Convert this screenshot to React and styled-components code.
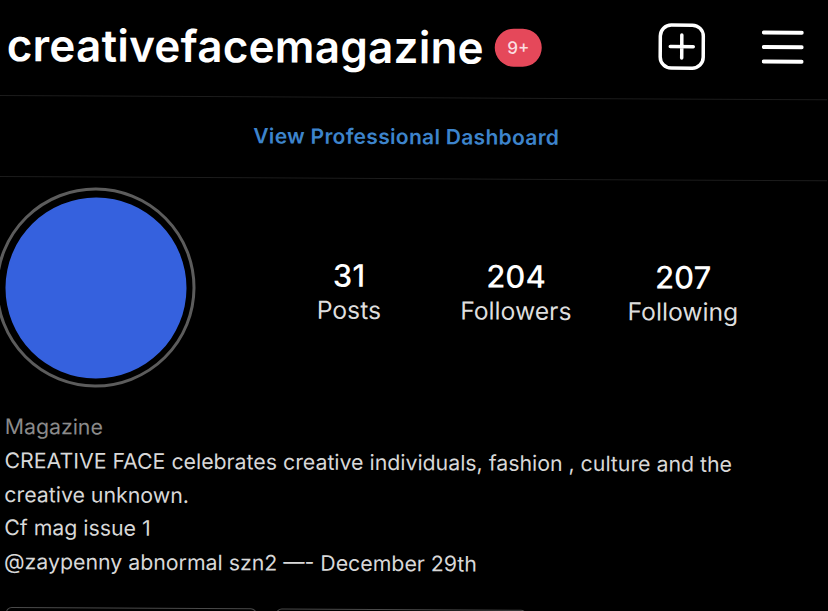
import styled, { createGlobalStyle } from "styled-components";

const GlobalStyle = createGlobalStyle`
  html, body {
    margin: 0;
    background: #000;
    overflow: hidden;
  }
`;

const Page = styled.div`
  width: 828px;
  height: 611px;
  background: #000;
  color: #fff;
  font-family: Inter, "Liberation Sans", sans-serif;
  transform: rotate(0.3deg);
  transform-origin: 0 0;
  overflow: hidden;
`;

const Header = styled.header`
  height: 96px;
  display: flex;
  align-items: center;
  padding: 0 24px 5px 7px;
  box-sizing: border-box;
  border-bottom: 1px solid #1c1c1c;
`;

const Username = styled.h1`
  margin: 0;
  font-size: 44px;
  font-weight: 600;
  letter-spacing: 0.25px;
`;

const Badge = styled.span`
  margin-left: 11px;
  width: 47px;
  height: 38px;
  border-radius: 19px;
  background: #e5485a;
  color: #fbdde0;
  font-size: 17px;
  font-weight: 500;
  display: flex;
  align-items: center;
  justify-content: center;
`;

const HeaderIcons = styled.div`
  margin-left: auto;
  display: flex;
  align-items: center;
  gap: 56px;
  transform: translateY(-2px);
`;

const DashboardBar = styled.div`
  height: 81px;
  padding: 0 0 4px 254px;
  display: flex;
  align-items: center;
  box-sizing: border-box;
  border-bottom: 1px solid #1c1c1c;
  color: #3d84cc;
  font-size: 21px;
  font-weight: 600;
  letter-spacing: 0.3px;
`;

const ProfileRow = styled.section`
  display: flex;
  align-items: center;
  padding: 10px 0 0 0;
`;

const AvatarRing = styled.div`
  flex: none;
  width: 200px;
  height: 200px;
  margin-left: -3px;
  border-radius: 50%;
  border: 3px solid #5c5c5c;
  box-sizing: border-box;
  display: flex;
  align-items: center;
  justify-content: center;
`;

const Avatar = styled.div`
  width: 181px;
  height: 181px;
  border-radius: 50%;
  background: #3561de;
`;

const Stats = styled.div`
  display: flex;
  margin: 6px 0 0 70px;
`;

const Stat = styled.div`
  width: 167px;
  display: flex;
  flex-direction: column;
  align-items: center;
`;

const StatValue = styled.span`
  font-size: 31px;
  font-weight: 500;
  line-height: 36px;
`;

const StatLabel = styled.span`
  font-size: 24.7px;
  font-weight: 400;
  line-height: 33px;
  color: #dedede;
`;

const Bio = styled.div`
  margin-top: 23px;
  padding-left: 7px;
  font-size: 21.3px;
  line-height: 33.75px;
  color: #d8d8d8;
`;

const Category = styled.div`
  color: #8a8a8a;
`;

const BioLine = styled.div`
  white-space: nowrap;
`;

const ButtonRow = styled.div`
  margin-top: 28px;
  padding-left: 9px;
  display: flex;
  gap: 19px;
`;

const ActionButton = styled.div`
  width: 251px;
  height: 40px;
  border-radius: 6px;
  border: 1px solid #4a4a4a;
  box-sizing: border-box;
`;

function PlusIcon() {
  return (
    <svg width="48" height="48" viewBox="0 0 48 48" fill="none" stroke="#fff" strokeLinecap="round">
      <rect x="2.5" y="2.5" width="43" height="43" rx="11" strokeWidth="3.5" />
      <path d="M24 12.5v23M12.5 24h23" strokeWidth="3.5" />
    </svg>
  );
}

function MenuIcon() {
  return (
    <svg width="42" height="34" viewBox="0 0 42 34" fill="none" stroke="#fff" strokeWidth="4" strokeLinecap="round">
      <path d="M2 2.5h38M2 17h38M2 31.5h38" />
    </svg>
  );
}

const stats = [
  { value: "31", label: "Posts" },
  { value: "204", label: "Followers" },
  { value: "207", label: "Following" },
];

const bio = [
  "CREATIVE FACE celebrates creative individuals, fashion , culture and the",
  "creative unknown.",
  "Cf mag issue 1",
  "@zaypenny abnormal szn2 —- December 29th",
];

export default function App() {
  return (
    <>
      <GlobalStyle />
      <Page>
        <Header>
          <Username>creativefacemagazine</Username>
          <Badge>9+</Badge>
          <HeaderIcons>
            <PlusIcon />
            <MenuIcon />
          </HeaderIcons>
        </Header>
        <DashboardBar>View Professional Dashboard</DashboardBar>
        <ProfileRow>
          <AvatarRing>
            <Avatar />
          </AvatarRing>
          <Stats>
            {stats.map(({ value, label }) => (
              <Stat key={label}>
                <StatValue>{value}</StatValue>
                <StatLabel>{label}</StatLabel>
              </Stat>
            ))}
          </Stats>
        </ProfileRow>
        <Bio>
          <Category>Magazine</Category>
          {bio.map((line) => (
            <BioLine key={line}>{line}</BioLine>
          ))}
        </Bio>
        <ButtonRow>
          <ActionButton />
          <ActionButton />
        </ButtonRow>
      </Page>
    </>
  );
}
